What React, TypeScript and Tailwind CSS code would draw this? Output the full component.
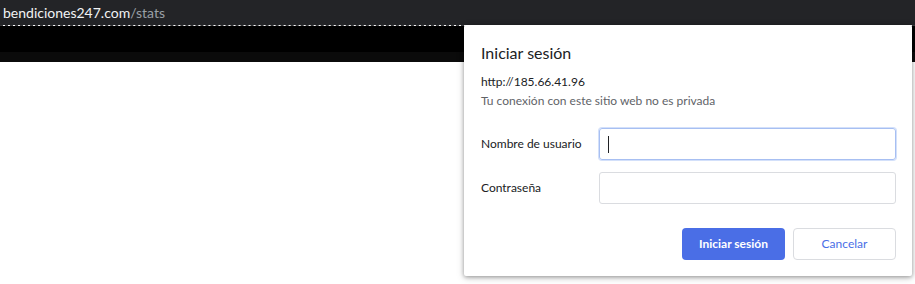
import React from "react";

const font = { fontFamily: 'Lato, "Open Sans", Arial, sans-serif' };

const LoginDialog: React.FC = () => {
  return (
    <div className="absolute left-[464px] top-[25px] w-[448px] bg-white rounded-[2px] shadow-[0_1px_4px_rgba(0,0,0,0.35),0_2px_8px_rgba(0,0,0,0.15)] pl-[17px] pr-[16px] pt-[18px] pb-[16px]">
      <h1 className="text-[16px] leading-[20px] text-[#202124]">Iniciar sesión</h1>
      <p className="mt-[11px] text-[12px] leading-[16px] text-[#202124]">http://185.66.41.96</p>
      <p className="mt-[3px] text-[12px] leading-[16px] text-[#5f6368]">
        Tu conexión con este sitio web no es privada
      </p>

      {/* campos */}
      <div className="mt-[19px] flex flex-col gap-[12px]">
        <div className="flex items-center">
          <label className="w-[118px] text-[12px] text-[#202124]">Nombre de usuario</label>
          <div className="flex-1 h-[32px] rounded-[3px] border border-[#a7bff2] shadow-[0_0_0_1px_#d3e0fa] flex items-center pl-[8px]">
            <span className="w-px h-[17px] bg-[#202124]" />
          </div>
        </div>
        <div className="flex items-center">
          <label className="w-[118px] text-[12px] text-[#202124]">Contraseña</label>
          <div className="flex-1 h-[32px] rounded-[3px] border border-[#dadce0]" />
        </div>
      </div>

      {/* botones */}
      <div className="mt-[24px] flex justify-end gap-[8px]">
        <button className="w-[103px] h-[32px] rounded-[4px] bg-[#4a6ee6] text-white text-[12px] font-bold">
          Iniciar sesión
        </button>
        <button className="w-[103px] h-[32px] rounded-[4px] border border-[#dadce0] bg-white text-[#4a6ee6] text-[12px]">
          Cancelar
        </button>
      </div>
    </div>
  );
};

export default function App() {
  return (
    <div className="relative w-[915px] h-[284px] bg-white overflow-hidden" style={font}>
      {/* barra de direcciones */}
      <div className="h-[25px] bg-[#232427] flex items-center pl-[3px] pt-[1px] text-[14px] leading-none">
        <span className="text-[#f1f3f4]">bendiciones247.com</span>
        <span className="text-[#9aa0a6]">/stats</span>
      </div>
      <div className="h-px border-t border-dashed border-[#3a3b3e]" />
      <div className="h-[26px] bg-black" />
      <div className="h-[10px] bg-[#0b0b0b]" />

      <LoginDialog />
    </div>
  );
}
